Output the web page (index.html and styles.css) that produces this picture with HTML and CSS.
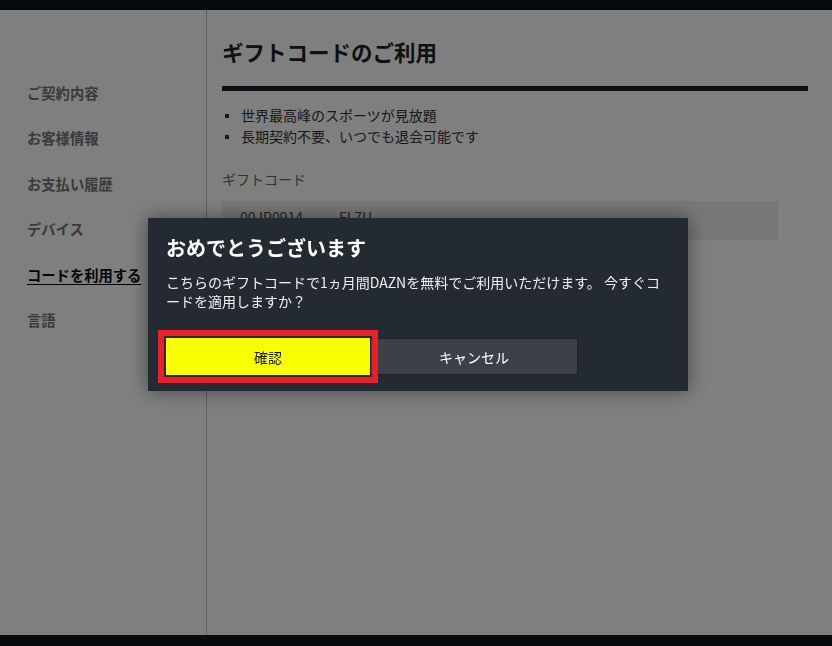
FILE: index.html
```html
<!DOCTYPE html>
<html lang="ja">
<head>
<meta charset="utf-8">
<title>ギフトコードのご利用</title>
<link rel="stylesheet" href="styles.css">
</head>
<body>
<div class="page">
  <header class="topbar"></header>
  <div class="layout">
    <nav class="sidebar">
      <a class="nav-item">ご契約内容</a>
      <a class="nav-item">お客様情報</a>
      <a class="nav-item">お支払い履歴</a>
      <a class="nav-item">デバイス</a>
      <a class="nav-item active">コードを利用する</a>
      <a class="nav-item">言語</a>
    </nav>
    <main class="main">
      <h1 class="title">ギフトコードのご利用</h1>
      <div class="rule"></div>
      <ul class="bullets">
        <li>世界最高峰のスポーツが見放題</li>
        <li>長期契約不要、いつでも退会可能です</li>
      </ul>
      <div class="label">ギフトコード</div>
      <div class="code-input"><span>00JP0914</span><span class="code-tail">FL7U</span></div>
    </main>
  </div>
  <footer class="bottombar"></footer>
</div>
<div class="overlay"></div>
<div class="modal">
  <h2 class="modal-title">おめでとうございます</h2>
  <p class="modal-text">こちらのギフトコードで1ヵ月間DAZNを無料でご利用いただけます。 今すぐコードを適用しますか？</p>
  <div class="modal-actions">
    <button class="btn btn-confirm">確認</button>
    <button class="btn btn-cancel">キャンセル</button>
  </div>
</div>
</body>
</html>
```
FILE: styles.css
```css
html, body {
  margin: 0;
  padding: 0;
}
body {
  width: 832px;
  height: 646px;
  overflow: hidden;
  font-family: "Noto Sans CJK JP", "Noto Sans", sans-serif;
  background: #ffffff;
}
.page {
  display: flex;
  flex-direction: column;
  height: 646px;
}
.topbar {
  height: 10px;
  background: #0c161e;
}
.bottombar {
  height: 11px;
  background: #0c161e;
}
.layout {
  flex: 1;
  display: flex;
}
.sidebar {
  width: 207px;
  border-right: 1px solid #bdbdbd;
  box-sizing: border-box;
  padding: 73px 0 0 27px;
  display: flex;
  flex-direction: column;
  gap: 25.4px;
}
.nav-item {
  font-size: 14.3px;
  line-height: 20px;
  font-weight: bold;
  color: #747474;
  text-decoration: none;
  align-self: flex-start;
}
.nav-item.active {
  color: #0a0a0a;
  text-decoration: underline;
  text-underline-offset: 3px;
}
.main {
  flex: 1;
  padding: 28px 24px 0 15px;
}
.title {
  margin: 0;
  font-size: 21.5px;
  line-height: 28px;
  font-weight: bold;
  color: #222;
}
.rule {
  height: 5px;
  background: #141c24;
  margin-top: 20px;
}
.bullets {
  list-style: none;
  margin: 14px 0 0;
  padding: 0;
}
.bullets li {
  position: relative;
  padding-left: 19px;
  font-size: 14px;
  line-height: 21px;
  color: #333;
}
.bullets li::before {
  content: "";
  position: absolute;
  left: 3px;
  top: 9px;
  width: 4px;
  height: 4px;
  background: #333;
}
.label {
  margin-top: 22px;
  font-size: 14px;
  line-height: 20px;
  color: #666;
}
.code-input {
  margin-top: 12px;
  width: 556px;
  height: 39px;
  box-sizing: border-box;
  background: #eeeeee;
  padding: 6px 18px;
  font-size: 14px;
  line-height: 20px;
  color: #444;
}
.code-tail {
  margin-left: 36px;
}
.overlay {
  position: fixed;
  inset: 0;
  background: rgba(0, 0, 0, 0.5);
}
.modal {
  position: fixed;
  left: 148px;
  top: 218px;
  width: 540px;
  box-sizing: border-box;
  padding: 16px 18px 16px;
  background: #242a31;
  box-shadow: 0 0 18px rgba(0, 0, 0, 0.45);
  color: #fff;
}
.modal-title {
  margin: 0;
  font-size: 20px;
  line-height: 28px;
  font-weight: bold;
}
.modal-text {
  margin: 11px 0 0;
  font-size: 14px;
  line-height: 18.5px;
  color: #f0f0f0;
}
.modal-actions {
  display: flex;
  margin-top: 28px;
}
.btn {
  font-family: inherit;
  font-size: 14px;
  height: 37px;
  border: none;
  padding: 0;
  cursor: pointer;
}
.btn-confirm {
  position: relative;
  z-index: 1;
  width: 204px;
  background: #f8ff00;
  color: #1a1a1a;
  outline: 6px solid #e8202a;
  outline-offset: 2px;
}
.btn-cancel {
  width: 208px;
  background: #3b4147;
  border: 1px solid #1c2126;
  color: #fff;
}
```
